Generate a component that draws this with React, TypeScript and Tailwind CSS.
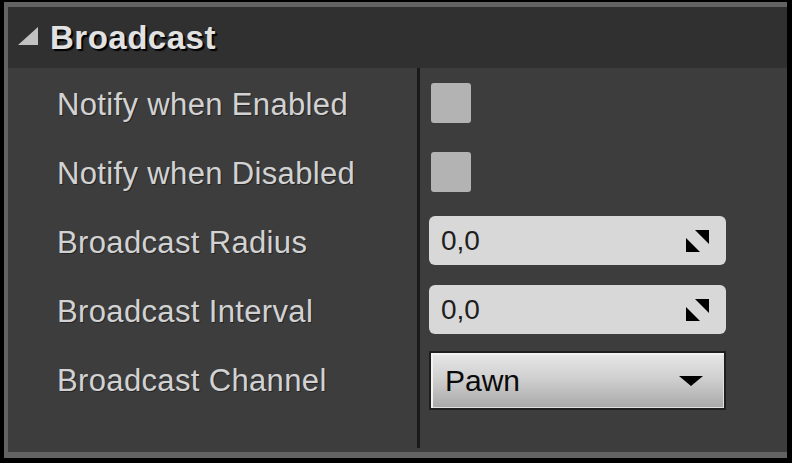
export default function App() {
  const labels = [
    "Notify when Enabled",
    "Notify when Disabled",
    "Broadcast Radius",
    "Broadcast Interval",
    "Broadcast Channel",
  ];
  const spinner = (
    <svg width="23" height="22" viewBox="0 0 23 22">
      <polygon points="9,0 23,0 23,14" fill="#000" />
      <polygon points="0,8 0,22 14,22" fill="#000" />
    </svg>
  );
  return (
    <div className="w-[792px] h-[463px] bg-black pl-[4px] pt-[2px] pr-[5px] pb-[5px] font-['Liberation_Sans',Arial,sans-serif]">
      <div className="h-full flex flex-col border-l-[4px] border-t-[5px] border-b-[6px] border-[#636363] bg-[#3d3d3d]">
        <div className="h-[61px] shrink-0 bg-[#303030] flex items-center pl-[10px] gap-[12px]">
          <svg width="20" height="18" viewBox="0 0 20 18" className="mt-[-3px]">
            <polygon points="20,0 20,18 0,18" fill="#c2c2c2" />
          </svg>
          <span className="text-[33px] font-bold tracking-[0.5px] text-[#e2e2e2] leading-none [text-shadow:2px_2px_1px_#000]">
            Broadcast
          </span>
        </div>
        <div className="flex-1 flex">
          <div className="w-[409px] flex flex-col pl-[49px]">
            {labels.map((l) => (
              <div key={l} className="h-[69px] flex items-center pt-[3px] text-[31px] tracking-[0.35px] text-[#d2d2d2] leading-none [text-shadow:1px_1px_0_#262626]">
                {l}
              </div>
            ))}
          </div>
          <div className="w-[3px] bg-[#1a1a1a] mb-[4px]" />
          <div className="flex-1 flex flex-col pl-[9px]">
            <div className="h-[69px] flex items-center">
              <div className="ml-[2px] w-[40px] h-[40px] rounded-[3px] bg-[#b3b3b3]" />
            </div>
            <div className="h-[69px] flex items-center">
              <div className="ml-[2px] w-[40px] h-[40px] rounded-[3px] bg-[#b3b3b3]" />
            </div>
            <div className="h-[69px] flex items-center">
              <div className="w-[297px] h-[49px] rounded-[6px] bg-[#d8d8d8] flex items-center justify-between pl-[12px] pr-[17px]">
                <span className="text-[28px] text-[#1e1e1e] leading-none">0,0</span>
                {spinner}
              </div>
            </div>
            <div className="h-[69px] flex items-center">
              <div className="w-[297px] h-[49px] rounded-[6px] bg-[#d8d8d8] flex items-center justify-between pl-[12px] pr-[17px]">
                <span className="text-[28px] text-[#1e1e1e] leading-none">0,0</span>
                {spinner}
              </div>
            </div>
            <div className="h-[69px] flex items-center pt-[4px]">
              <div className="w-[297px] h-[59px] border-[2px] border-[#1f1f1f] bg-[linear-gradient(#e8e8e8,#d0d0d0_45%,#a8a8a8)] shadow-[inset_2px_2px_0_#f2f2f2,inset_-1px_-1px_0_#e0e0e0] flex items-center justify-between pl-[14px] pr-[21px]">
                <span className="text-[30px] text-[#0a0a0a] leading-none">Pawn</span>
                <svg width="24" height="10" viewBox="0 0 24 10">
                  <polygon points="0,0 24,0 12,10" fill="#000" />
                </svg>
              </div>
            </div>
          </div>
        </div>
      </div>
    </div>
  );
}
